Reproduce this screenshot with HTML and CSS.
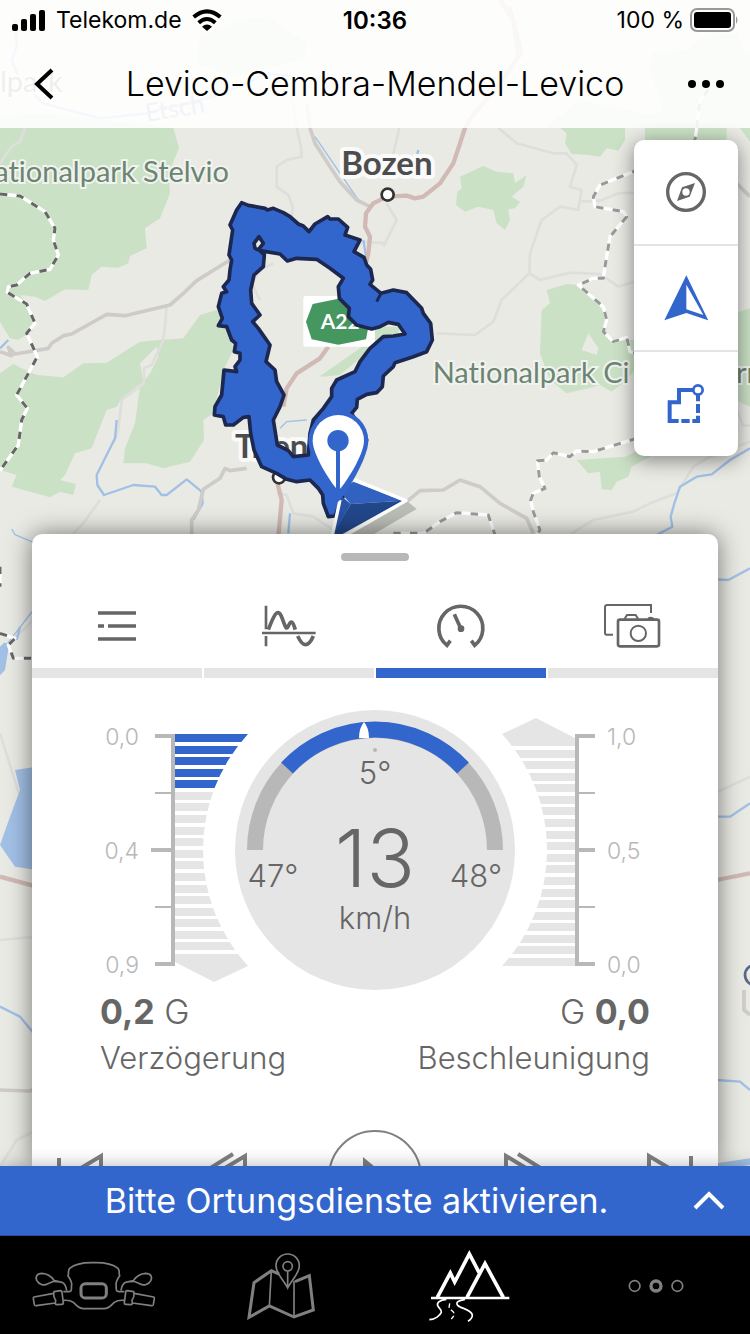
FILE: index.html
```html
<!DOCTYPE html>
<html lang="de">
<head>
    <meta charset="UTF-8">
    <meta name="viewport" content="width=device-width, initial-scale=1.0">
    <title>Levico-Cembra-Mendel-Levico</title>
    <link rel="stylesheet" href="styles.css">
</head>
<body>
    <div class="app">
        <!-- Map, drawn at three units per pixel -->
        <svg class="map" viewBox="0 0 2250 4002" preserveAspectRatio="xMidYMin slice" role="img" aria-label="Karte">
            <g class="forest">
                <path d="M0 350L120 340 250 355 390 370 520 384 537 444 506 520 510 580 480 655 435 685 440 745 390 768 385 790 355 803 305 800 275 825 265 870 195 868 135 903 105 890 60 885 25 870 0 850Z"/>
                <path d="M0 850L60 885 95 930 98 990 55 1020 30 1015 0 965Z"/>
                <path d="M0 1120L40 1092 65 1105 110 1125 190 1132 250 1090 320 1088 365 1060 420 1025 480 1020 550 1015 600 945 650 930 690 1000 700 1050 670 1110 640 1240 610 1260 612 1320 570 1385 490 1405 440 1390 370 1390 375 1345 405 1270 420 1160 450 1120 475 1070 470 1040 420 1090 430 1145 365 1195 350 1220 320 1230 275 1345 225 1360 195 1425 180 1440 228 1452 220 1485 180 1475 150 1492 35 1460 50 1425 0 1410Z"/>
                <path d="M1680 384L1875 384 1875 420 1855 452 1820 445 1800 470 1765 465 1715 462 1695 430 1700 400Z"/>
                <path d="M1935 384H2180V420H1935ZM2220 384H2250V425Z"/>
                <path d="M1380 530L1450 498 1490 515 1540 520 1545 550 1580 525 1570 560 1535 590 1560 605 1545 625 1525 628 1530 660 1515 690 1490 670 1480 630 1435 620 1395 635 1368 615 1372 575 1385 565Z"/>
                <path d="M1640 870L1700 852 1735 855 1790 905 1820 950 1810 1000 1850 1020 1905 1020 1905 1110 1880 1140 1835 1175 1800 1155 1765 1165 1700 1180 1650 1140 1620 1060 1625 930 1650 910Z"/>
                <path d="M1875 1370L2000 1310 2000 1320 1950 1370 1895 1400 1885 1430 1850 1445 1835 1470 1805 1468 1800 1415 1765 1420 1730 1380Z"/>
                <path d="M2205 940L2250 925V1220L2205 1200Z"/>
                <path d="M1640 380L1740 300 1950 345 1990 330 1950 200 1960 160 2070 150 2110 110 2210 100 2230 150 2250 160V384H1640ZM590 190L710 230 910 175 920 130 800 50 730 60 600 110Z"/>
                <path d="M920 1110L960 1128 1080 1045 1100 980 1200 980 1190 1015 1085 1070 1020 1125 965 1130Z"/>
            </g>
            <path class="ground" d="M1765 1000L1795 1045 1790 1065 1745 1050Z"/>
            <g class="minor-road">
                <path d="M75 384L60 425 35 440 10 475 0 490M870 250L890 384 903 440 905 470 860 480 830 500V560L865 585 878 620 875 660"/>
                <path d="M1198 384L1180 460 1160 540M1495 384L1550 430 1660 460 1700 460 1730 495 1710 560 1745 570 1735 630 1680 620 1625 660 1590 760 1588 820 1505 900 1480 965 1425 1005 1310 1000"/>
                <path d="M1745 605L1800 602 1855 580 1910 578M1588 820L1620 840 1710 818 1800 822 1855 860 1920 840"/>
                <path d="M500 915L495 980 488 1025 455 1095 432 1105V1150L365 1200 355 1290 340 1330M300 1500L250 1570 210 1610M0 1960L130 1830 210 1690"/>
                <path d="M1160 730L1085 725 1040 780 1050 870M780 900L755 850 780 810 820 790M830 1480L860 1485 880 1540 940 1550 1000 1590"/>
                <path d="M1715 1600L1780 1560 1900 1535 1950 1510 2030 1480 2080 1400 2130 1370 2250 1325M2190 1180L2230 1277H2250M2100 2400L2250 2330M0 2200L110 2550"/>
                <path d="M0 3500L50 3420 130 3380M0 2820L110 2810M1160 610L1190 660 1150 740"/>
            </g>
            <g class="water-line">
                <path d="M45 60L50 140 35 180 60 240 130 310 300 355 440 340 640 290 740 250 800 220 880 230"/>
                <path d="M350 1260L345 1315 290 1425 292 1455 312 1485 400 1455 465 1460 485 1485 500 1485 560 1438 605 1475 608 1510 580 1560"/>
                <path d="M2250 1345L2190 1380 2135 1423 2090 1430 2040 1460 2023 1510 2012 1550 2017 1580 1970 1605"/>
                <path d="M0 1045L25 1020M1090 720L1100 780M1530 20L1560 130 1565 170M1255 450L1245 490"/>
                <path d="M0 3020L60 3050 110 3110M2150 2450L2190 2450 2250 2410M2150 3240L2220 3245 2250 3270M870 1540L865 1600M60 1880L50 1920M2150 1738L2185 1740 2250 1705"/>
            </g>
            <g class="stream">
                <path d="M945 410L1075 600M35 1587L45 1604 100 1627M0 1960L100 1830M640 810L690 785M840 1285L860 1265 920 1260"/>
            </g>
            <path class="lake" d="M0 1940L12 1928 28 1930 15 2010 0 2026ZM110 2300L45 2310 60 2370 30 2450 0 2535 45 2600 110 2610ZM2150 3490L2250 3475V3495L2150 3510Z"/>
            <g class="road">
                <path d="M920 310L930 384 945 430 990 500 1020 545 1070 600 1110 620"/>
                <path d="M0 1055L35 1067 25 1042 45 1062 145 1045 155 1030 190 1007 215 1002 320 943 375 947 510 915 550 880 590 842 690 780 760 745"/>
                <path d="M740 1405L690 1412 675 1405 660 1435 610 1468 595 1530 575 1560V1620M1190 1530L1260 1472 1330 1470 1380 1440 1440 1460 1500 1510 1580 1555 1600 1600"/>
                <path d="M0 3270L90 3273 130 3250M2180 430L2200 540 2250 590M2232 2970V3030L2250 3045"/>
            </g>
            <g class="motorway">
                <path d="M1500 0L1540 60 1555 170 1500 250 1415 350 1395 384 1380 430 1360 490 1320 550 1270 590 1245 595 1220 587 1160 590 1120 610 1098 640 1095 680 1110 710 1105 760 1095 800"/>
                <path d="M985 1040L960 1075 890 1120 860 1165 850 1220M825 1420L845 1500 835 1610"/>
                <path d="M0 2630L110 2660M2150 2640L2250 2620"/>
            </g>
            <g class="border-base">
                <path id="border-west" d="M0 582L60 588 135 635 165 685 160 720 175 765 150 808 90 820 50 855 25 860 22 877 80 912 105 970 80 1000 112 1070 50 1185 82 1225 65 1260 55 1335 0 1412M0 1700L0 1760M0 1900L45 1915 25 1935 40 1975 100 1975"/>
                <path id="border-east" d="M2125 270L2100 300 2090 384 2085 420 1900 515 1800 555 1780 590 1785 620 1870 635 1880 650 1830 710 1815 800 1810 835 1780 835 1735 855 1810 920 1820 960 1810 995 1840 1025 1880 1012 1890 1055 1910 1060"/>
                <path id="border-south" d="M1910 1315L1780 1355 1730 1353 1710 1370 1660 1358 1640 1380 1612 1382 1618 1430 1635 1465 1600 1480 1592 1500 1600 1535 1620 1590 1600 1620M1180 1600H1270L1320 1565 1370 1538 1465 1545 1485 1605"/>
            </g>
            <g class="border-dash">
                <use class="dark" href="#border-west"/>
                <use href="#border-east"/>
                <use href="#border-south"/>
            </g>

            <g class="park-label">
                <text x="687" y="545" text-anchor="end">ationalpark Stelvio</text>
                <text x="0" y="277">lpark</text>
                <text x="1298" y="1148">Nationalpark Ci</text>
                <text x="2208" y="1148">rr</text>
            </g>
            <text class="river-label" x="440" y="365" transform="rotate(-9 440 365)">Etsch</text>
            <g class="city-label">
                <text x="1024" y="525">Bozen</text>
                <text x="705" y="1374">Trient</text>
            </g>
            <circle class="city" cx="1163" cy="584" r="18"/>
            <circle class="city" cx="837" cy="1432" r="18"/>
            <circle class="town" cx="2265" cy="2925" r="30"/>

            <g class="shield">
                <rect x="910" y="888" width="215" height="152" rx="8"/>
                <path d="M938 912L1015 896 1095 912 1108 965 1098 1018 1015 1034 935 1018 918 965Z"/>
                <text x="962" y="988">A22</text>
            </g>

            <g transform="translate(540 540)">
                <path class="route" d="M185 68L205 76 255 85 262 90 280 85 310 98 330 110 355 132 370 138 387 155 405 132 443 110 450 117 475 117 503 142 495 165 540 180 522 215 552 232 560 255 572 268 578 300 570 313 603 340 640 330 680 338 725 385 730 400 752 430 757 480 740 515 700 530 645 548 640 560 610 588 607 620 590 638 560 643 532 658 530 682 515 700 560 780 485 960 465 1008 445 1010 430 970 428 945 415 925 390 900 350 905 320 898 290 880 245 860 222 810 212 760 207 710 190 712 160 735 137 735 130 710 103 705 105 680 125 645 132 570 170 575 165 560 180 540 180 520 163 515 167 490 155 480 140 440 115 437 127 415 115 380 125 340 140 335 130 320 147 300 150 270 155 240 147 225 158 150 150 135 170 90Z
                    M240 212L300 222 322 243 350 235 410 238 450 265 490 295 475 320 478 355 508 385 505 410 530 435 575 447 600 440 625 427 655 433 675 462 640 468 610 470 570 505 540 545 525 575 470 600 455 625 455 650 430 685 400 720 390 760 385 825 340 830 325 812 292 795 280 720 300 680 312 645 290 605 285 570 258 545 270 495 235 445 218 425 240 405 215 370 212 330 222 285 250 260 253 225Z
                    M237 170L250 190 238 205 240 212 225 205 222 190Z"/>
                <path class="route-edge" d="M603 340L590 365"/>
                <path class="puck-shadow" d="M680 962L710 987 560 1075 470 1075Z"/>
                <path class="puck-light" d="M480 935L520 905 668 962 512 972Z"/>
                <path class="puck-dark" d="M512 972L668 962 455 1080 460 1060Z"/>
                <path class="puck-mid" d="M480 945L512 972 458 1068 478 965Z"/>
                <path class="puck-edge" d="M520 898L678 962 450 1092M480 960L455 1075"/>
                <path class="pin-border" d="M475 965C455 945 385 835 385 782A90 90 0 0 1 565 782C565 835 495 945 475 965Z"/>
                <path class="pin" d="M475 932C455 912 398 825 398 782A77 77 0 0 1 552 782C552 825 495 912 475 932Z"/>
                <circle class="pin-border" cx="474" cy="782" r="32"/>
                <path class="pin-stem" d="M474 800V940"/>
            </g>
        </svg>

        <header class="topbar">
            <div class="status">
                <div class="carrier">
                    <svg width="34" height="21" viewBox="0 0 34 21"><rect y="14" width="6" height="7" rx="2"/><rect x="9" y="9" width="6" height="12" rx="2"/><rect x="18" y="4" width="6" height="17" rx="2"/><rect x="27" width="6" height="21" rx="2"/></svg>
                    <span>Telekom.de</span>
                    <svg width="30" height="22" viewBox="0 0 90 66" class="wifi"><path d="M5 24Q45-10 85 24M20 41Q45 19 70 41"/><path class="dot" d="M45 66L30 53Q45 40 60 53Z"/></svg>
                </div>
                <time>10:36</time>
                <div class="battery">
                    <span>100 %</span>
                    <svg width="48" height="24" viewBox="0 0 48 24"><rect class="case" x="1" y="1" width="43" height="22" rx="6"/><rect x="4" y="4" width="37" height="16" rx="3"/><path class="nub" d="M46 8Q49 12 46 16Z"/></svg>
                </div>
            </div>
            <nav class="titlebar">
                <button class="back" aria-label="Zurück"><svg width="20" height="32" viewBox="0 0 20 32"><path d="M18 2L3 16L18 30"/></svg></button>
                <h1>Levico-Cembra-Mendel-Levico</h1>
                <button class="more" aria-label="Mehr"><svg width="36" height="8" viewBox="0 0 36 8"><circle cx="4" cy="4" r="4"/><circle cx="18" cy="4" r="4"/><circle cx="32" cy="4" r="4"/></svg></button>
            </nav>
        </header>

        <main>
            <div class="tools">
                <button aria-label="Kompass">
                    <svg width="42" height="42" viewBox="870 513 126 126"><circle class="ring" cx="933" cy="576" r="55"/><path fill-rule="evenodd" d="M960 549L944 590 906 603 921 562ZM933 565A11 11 0 1 0 933 587A11 11 0 1 0 933 565Z"/></svg>
                </button>
                <button aria-label="Position" class="blue">
                    <svg width="44" height="46" viewBox="701 46 132 138"><path fill-rule="evenodd" d="M768 47L834 182 768 160 702 182ZM768 75V149L819 166Z"/></svg>
                </button>
                <button aria-label="Route" class="blue">
                    <svg width="38" height="40" viewBox="709 373 114 120"><path class="line" d="M788 391H745V428H717V484H744M752 484H777M785 484H802V468M802 460V433M802 425V406"/><circle class="node" cx="802" cy="391" r="14"/></svg>
                </button>
            </div>

            <section class="sheet">
                <div class="grip"></div>
                <div class="tabs">
                    <button aria-label="Liste"><svg width="40" height="32" viewBox="201 240 120 96"><path class="s11" d="M204 249H318M204 288H222M234 288H318M204 327H318"/></svg></button>
                    <button aria-label="Verlauf"><svg width="56" height="44" viewBox="692 222 168 132"><path class="s8" d="M707 227V298M707 318V349M695 309H856"/><path class="s11" d="M714 299C728 262 736 248 743 248C754 248 760 285 768 294C774 296 776 276 783 276C789 277 791 288 795 299M802 318C810 335 817 344 825 344C834 344 842 335 849 318"/></svg></button>
                    <button aria-label="Messwerte" class="active"><svg width="50" height="46" viewBox="182 220 150 138"><path class="s11" d="M225 333L215 347A66 66 0 1 1 298 347L288 333"/><path class="s11" d="M237 254L256 296"/><circle cx="257" cy="297" r="10"/></svg></button>
                    <button aria-label="Fotos"><svg width="58" height="46" viewBox="687 218 174 138"><path class="s6" d="M714 313H695Q690 313 690 307V231Q690 224 697 224H828V248M748 267L756 254H782L790 267"/><rect class="s8" x="729" y="268" width="123" height="80" rx="6"/><circle class="s6" cx="790" cy="309" r="23"/><path d="M818 268V263Q820 259 827 259Q836 259 837 264V268Z"/></svg></button>
                </div>

                <svg class="gauge" viewBox="99 706 552 286" role="img" aria-label="Geschwindigkeit und Beschleunigung">
                    <defs>
                        <clipPath id="fan"><path d="M175 734H248A172 172 0 0 0 248 966L214 982 175 962Z"/></clipPath>
                    </defs>
                    <g class="bars" clip-path="url(#fan)">
                        <path class="lit" d="M175 738h80M175 750h80M175 761h80M175 773h80M175 784h80"/>
                        <path d="M175 796h80M175 807h80M175 819h80M175 831h80M175 842h80M175 854h80M175 865h80M175 877h80M175 889h80M175 900h80M175 912h80M175 923h80M175 935h80M175 946h80"/>
                        <rect x="175" y="954" width="80" height="30"/>
                    </g>
                    <g class="bars" transform="rotate(180 375 850)">
                        <g clip-path="url(#fan)">
                            <path d="M175 738h80M175 750h80M175 761h80M175 773h80M175 784h80M175 796h80M175 807h80M175 819h80M175 831h80M175 842h80M175 854h80M175 865h80M175 877h80M175 889h80M175 900h80M175 912h80M175 923h80M175 935h80M175 946h80"/>
                            <rect x="175" y="954" width="80" height="30"/>
                        </g>
                    </g>
                    <path class="axis" d="M155 736H173V964H155M151 850H173M595 736H577V964H595M577 850H595"/>
                    <path class="axis thin" d="M155 793H173M155 907H173M577 793H595M577 907H595"/>
                    <g class="scale">
                        <g text-anchor="end">
                            <text x="139" y="745">0,0</text>
                            <text x="139" y="859">0,4</text>
                            <text x="139" y="973">0,9</text>
                        </g>
                        <text x="607" y="745">1,0</text>
                        <text x="607" y="859">0,5</text>
                        <text x="607" y="973">0,0</text>
                    </g>
                    <circle class="dial" cx="375" cy="850" r="140"/>
                    <path class="arc" d="M255 850A120 120 0 0 1 495 850"/>
                    <path class="arc lit" d="M287 768A120 120 0 0 1 463 768"/>
                    <path class="needle" d="M359 738Q359 728 364 722Q369 728 369 738Z"/>
                    <circle class="mark" cx="375" cy="750" r="2"/>
                    <g class="reading" text-anchor="middle">
                        <text x="375" y="784">5°</text>
                        <text x="273" y="887">47°</text>
                        <text x="476" y="887">48°</text>
                        <text x="375" y="929">km/h</text>
                        <text class="speed" x="375" y="887">13</text>
                    </g>
                </svg>

                <dl class="stats">
                    <div>
                        <dd><b>0,2</b> G</dd>
                        <dt>Verzögerung</dt>
                    </div>
                    <div class="right">
                        <dd>G <b>0,0</b></dd>
                        <dt>Beschleunigung</dt>
                    </div>
                </dl>

                <div class="player">
                    <button aria-label="Zum Anfang"><svg width="46" height="50" viewBox="0 0 46 50"><path d="M2 6V44M44 4V46L9 25Z"/></svg></button>
                    <button aria-label="Zurückspulen"><svg width="62" height="50" viewBox="0 0 62 50"><path d="M60 4V46L25 25ZM48 2L11 25 48 48"/></svg></button>
                    <button aria-label="Abspielen" class="play"><svg width="24" height="40" viewBox="0 0 24 40"><path d="M0 0L24 20L0 40Z"/></svg></button>
                    <button aria-label="Vorspulen"><svg width="62" height="50" viewBox="0 0 62 50"><path d="M2 4V46L37 25ZM14 2L51 25 14 48"/></svg></button>
                    <button aria-label="Zum Ende"><svg width="46" height="50" viewBox="0 0 46 50"><path d="M44 4V46M2 4V46L37 25Z"/></svg></button>
                </div>
            </section>
        </main>

        <div class="banner">
            <p>Bitte Ortungsdienste aktivieren.</p>
            <button aria-label="Aufklappen"><svg width="32" height="20" viewBox="0 0 32 20"><path d="M2 17L16 3L30 17"/></svg></button>
        </div>

        <nav class="tabbar">
            <a href="#fahrzeug" aria-label="Fahrzeug">
                <svg width="124" height="52" viewBox="98 811 372 156">
                    <g id="bar-half">
                        <path d="M284 819C253 818 227 823 211 836C205 842 209 852 206 858C212 867 216 873 217 882L216 900Q215 906 208 906H192M193 932C206 931 214 932 222 938C233 948 238 957 253 957H284"/>
                        <path d="M202 903C200 888 196 882 188 878L165 873C156 859 145 852 128 851C112 851 108 861 112 872C118 884 134 889 144 883L163 875L186 877"/>
                        <path d="M163 911L104 922Q101 923 102 927L105 945Q106 949 111 948L168 940M164 906L183 903Q188 903 188 908L192 939Q192 944 187 944L172 945Q168 945 168 940L169 932Q162 922 163 911Z"/>
                    </g>
                    <use href="#bar-half" transform="translate(567 0) scale(-1 1)"/>
                    <rect class="screen" x="245" y="882" width="76" height="43" rx="13"/>
                </svg>
            </a>
            <a href="#karte" aria-label="Karte">
                <svg width="70" height="68" viewBox="741 785 210 204"><path class="bold" d="M840 851L817 841 765 877 750 981 811 947 885 980 943 959 931 856 888 874"/><path d="M817 841L811 947M885 872V980M866 893C856 872 831 850 831 826A35 35 0 0 1 901 826C901 850 876 872 866 893ZM866 843V893"/><circle cx="866" cy="828" r="14"/></svg>
            </a>
            <a href="#touren" aria-label="Touren" class="current">
                <svg width="84" height="74" viewBox="158 782 252 222"><path class="mountain" d="M189 927L228 854 241 881 285 797 314 852M278 927L332 826 387 927"/><path class="ground-line" d="M170 929H405"/><path d="M216 933C196 935 187 943 190 952C193 960 203 963 201 972C197 981 183 994 165 994M272 933C252 936 243 943 250 951C259 961 291 962 294 980Q294 991 281 999"/><path class="mid-line" d="M226 945L224 959 238 972 239 982 231 992"/></svg>
            </a>
            <a href="#mehr" aria-label="Mehr">
                <svg width="56" height="16" viewBox="757 865 168 48"><circle class="small" cx="777" cy="889" r="16"/><circle class="big" cx="841" cy="889" r="15"/><circle class="small" cx="905" cy="889" r="16"/></svg>
            </a>
        </nav>
    </div>
</body>
</html>
```
FILE: styles.css
```css
* { box-sizing: border-box; }
body { margin: 0; font-family: Inter, "Liberation Sans", sans-serif; font-weight: 300; color: #666; }
h1, p, dl, dd, dt { margin: 0; font-weight: inherit; }
button { padding: 0; border: none; background: none; color: inherit; cursor: pointer; }
svg { display: block; }

.app { position: relative; display: flex; flex-direction: column; height: 100vh; overflow: hidden; }

/* Map */
.map { position: absolute; top: 0; left: 0; width: 100%; height: 100%; background: #e9eae4; font-family: Lato, "Open Sans", sans-serif; font-variant-ligatures: none; }
.map path { stroke-linejoin: round; }
.forest { fill: #cbe1c6; }
.ground { fill: #e9eae4; }
.minor-road { fill: none; stroke: #dededc; stroke-width: 8; }
.road { fill: none; stroke: #cfcbc8; stroke-width: 11; }
.motorway { fill: none; stroke: #d1b9b5; stroke-width: 13; }
.water-line { fill: none; stroke: #a2c0e6; stroke-width: 7; }
.stream { fill: none; stroke: #a2c0e6; stroke-width: 4; }
.lake { fill: #a2c0e6; }
.border-base { fill: none; stroke: #fff; stroke-width: 10; }
.border-dash { fill: none; stroke: #999; stroke-width: 9; stroke-dasharray: 22 28; }
.border-dash .dark { stroke: #666; }
.park-label { font-size: 87px; font-weight: 400; fill: #6b8573; stroke: #f2f3ef; stroke-width: 12; paint-order: stroke; }
.river-label { font-size: 75px; font-weight: 400; fill: #8f9bc0; }
.city-label { font-size: 99px; font-weight: 700; fill: #4d4d4d; stroke: #fafafa; stroke-width: 24; stroke-linejoin: round; paint-order: stroke; }
.city { fill: #fff; stroke: #333; stroke-width: 8; }
.town { fill: none; stroke: #5a6688; stroke-width: 8; }
.shield { fill: #fff; }
.shield path { fill: #46965f; }
.shield text { font-size: 63px; font-weight: 700; }
.route { fill: #3366cc; fill-rule: evenodd; stroke: #1c2850; stroke-width: 11; }
.route-edge { fill: none; stroke: #1c2850; stroke-width: 9; }
.puck-shadow { fill: #bbbdb7; }
.puck-light { fill: #3162c0; }
.puck-mid { fill: #2953a6; }
.puck-dark { fill: #22478a; }
.puck-edge { fill: none; stroke: #fff; stroke-width: 10; }
.pin { fill: #fff; }
.pin-border { fill: #3366cc; }
.pin-stem { stroke: #3366cc; stroke-width: 12; }

/* Header */
.topbar { position: relative; background: rgba(255, 255, 255, 0.88); color: #000; }
.status { display: grid; grid-template-columns: 1fr auto 1fr; align-items: center; height: 40px; padding: 0 12px; font-size: 23px; font-weight: 400; }
.status time { font-size: 24px; font-weight: 600; }
.carrier, .battery { display: flex; align-items: center; gap: 10px; }
.battery { justify-content: flex-end; gap: 6px; }
.wifi { fill: none; stroke: #000; stroke-width: 12; }
.wifi .dot { fill: #000; stroke: none; }
.case { fill: none; stroke: #999; stroke-width: 2; }
.nub { fill: #999; }
.titlebar { display: grid; grid-template-columns: 36px 1fr 36px; align-items: center; height: 88px; padding: 0 26px; }
.titlebar h1 { font-size: 34px; line-height: 44px; text-align: center; white-space: nowrap; }
.back { justify-self: center; }
.back path { fill: none; stroke: #000; stroke-width: 4; }

/* Map buttons */
main { position: relative; display: flex; flex-direction: column; flex: 1; min-height: 0; }
.tools { display: flex; flex-direction: column; align-self: flex-end; width: 104px; margin: 12px 12px 0 0; background: #fff; border-radius: 10px; box-shadow: 0 4px 20px rgba(0, 0, 0, 0.45); }
.tools button { display: grid; place-items: center; height: 104px; fill: #666; }
.tools button + button { height: 106px; border-top: 2px solid #e4e4e4; }
.tools .ring { fill: none; stroke: #666; stroke-width: 10; }
.tools .blue { fill: #3366cc; }
.tools .line { fill: none; stroke: #3366cc; stroke-width: 12; }
.tools .node { fill: #fff; stroke: #3366cc; stroke-width: 8; }

/* Sheet */
.sheet { flex: 1; min-height: 0; margin: 78px 32px 0; overflow: hidden; background: #fff; border-radius: 10px 10px 0 0; box-shadow: 0 0 24px rgba(0, 0, 0, 0.5); }
.grip { width: 68px; height: 8px; margin: 19px auto 11px; border-radius: 4px; background: #b8b8b8; }
.tabs { display: grid; grid-template-columns: repeat(4, 1fr); gap: 2px; }
.tabs button { display: grid; place-items: center; height: 106px; padding-top: 12px; border-bottom: 10px solid #e5e5e5; fill: #666; }
.tabs .active { border-color: #3366cc; }
.s6, .s8, .s11 { fill: none; stroke: #666; stroke-width: 6; }
.s8 { stroke-width: 8; }
.s11 { stroke-width: 11; }

.gauge { width: 100%; max-width: 552px; margin: 28px auto 0; }
.bars path { stroke: #e5e5e5; stroke-width: 8; }
.bars .lit { stroke: #3366cc; }
.bars rect, .dial { fill: #e5e5e5; }
.axis { fill: none; stroke: #b8b8b8; stroke-width: 4; }
.axis.thin { stroke-width: 2; }
.scale { font-size: 23px; fill: #b8b8b8; }
.arc { fill: none; stroke: #b8b8b8; stroke-width: 16; }
.arc.lit { stroke: #3366cc; }
.needle { fill: #fff; }
.mark { fill: #b8b8b8; }
.reading { font-size: 31px; fill: #666; }
.speed { font-size: 80px; }

.stats { display: flex; justify-content: space-between; padding: 0 68px; }
.stats div { display: flex; flex-direction: column; }
.stats dd { font-size: 34px; line-height: 40px; }
.stats b { font-weight: 700; }
.stats dt { font-size: 31px; line-height: 52px; }
.right { text-align: right; }

.player { display: flex; justify-content: space-between; align-items: center; height: 94px; margin-top: 46px; padding: 0 25px; }
.player svg { fill: none; stroke: #808080; stroke-width: 4; }
.play { display: grid; place-items: center; width: 94px; height: 94px; border: 2px solid #808080; border-radius: 50%; }
.player .play svg { fill: #808080; stroke: none; }

/* Banner */
.banner { position: relative; display: flex; align-items: center; height: 70px; padding: 0 25px 0 20px; border-bottom: 1px solid #264c99; background: #3366cc; color: #fff; box-shadow: 0 0 16px rgba(0, 0, 0, 0.3); }
.banner p { flex: 1; font-size: 34px; font-weight: 400; text-align: center; }
.banner path { fill: none; stroke: #fff; stroke-width: 4; }

/* Tab bar */
.tabbar { position: relative; display: grid; grid-template-columns: repeat(4, 1fr); height: 98px; background: #000; }
.tabbar a { display: grid; place-items: center; padding-top: 2px; }
.tabbar svg { fill: none; stroke: #808080; stroke-width: 5; }
.tabbar .bold, .tabbar .screen { stroke-width: 9; }
.current svg { stroke: #fff; }
.mountain { stroke-width: 11; }
.ground-line { stroke-width: 7; }
.mid-line { stroke-width: 4; stroke-dasharray: 14 8; }
.small { stroke-width: 5; }
.big { stroke-width: 10; }
```
